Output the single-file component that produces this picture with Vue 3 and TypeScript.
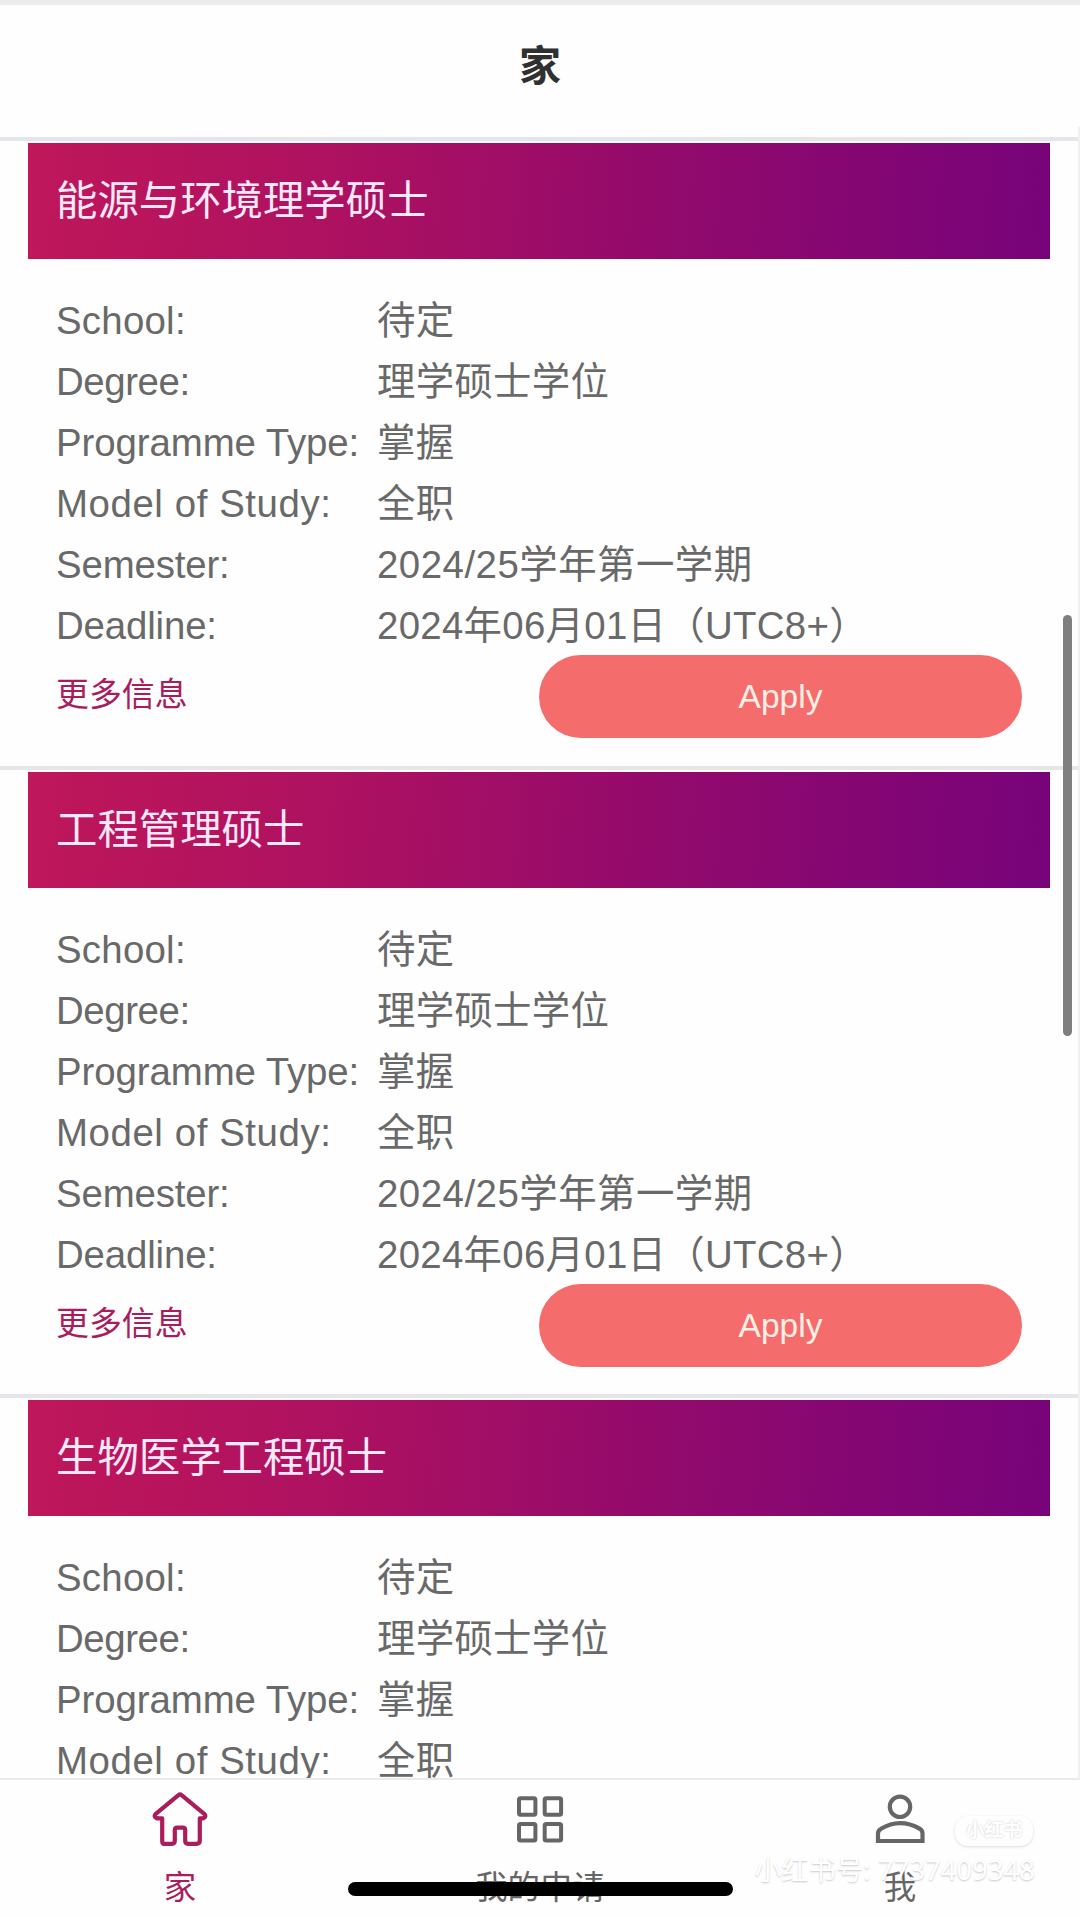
<script setup lang="ts">
interface Field {
  label: string
  value: string
  // letter spacing of the label and the value, in px
  labelTrack: number
  valueTrack: number
}

const titles: string[] = ['能源与环境理学硕士', '工程管理硕士', '生物医学工程硕士']

const fields: Field[] = [
  { label: 'School:', value: '待定', labelTrack: 0.25, valueTrack: 0.3 },
  { label: 'Degree:', value: '理学硕士学位', labelTrack: -0.4, valueTrack: 0.3 },
  { label: 'Programme Type:', value: '掌握', labelTrack: -0.08, valueTrack: 0.3 },
  { label: 'Model of Study:', value: '全职', labelTrack: 0.58, valueTrack: 0.3 },
  { label: 'Semester:', value: '2024/25学年第一学期', labelTrack: -0.15, valueTrack: 0.5 },
  { label: 'Deadline:', value: '2024年06月01日（UTC8+）', labelTrack: -0.15, valueTrack: 0.3 },
]
</script>

<template>
  <div class="screen">
    <header class="header"><h1>家</h1></header>
    <main class="list">
      <article v-for="title in titles" :key="title" class="card">
        <h2 class="banner">{{ title }}</h2>
        <dl class="fields">
          <div v-for="f in fields" :key="f.label" class="row">
            <dt :style="{ letterSpacing: f.labelTrack + 'px' }">{{ f.label }}</dt>
            <dd :style="{ letterSpacing: f.valueTrack + 'px' }">{{ f.value }}</dd>
          </div>
        </dl>
        <div class="actions">
          <a class="more">更多信息</a>
          <button class="apply" type="button">Apply</button>
        </div>
      </article>
    </main>
    <nav class="tabs">
      <a class="tab active">
        <svg width="60" height="60" viewBox="0 0 60 60" fill="none" stroke="currentColor" stroke-width="4.2" stroke-linejoin="round" stroke-linecap="round">
          <path d="M28.4 5.2Q30 3.7 31.6 5.2L54.2 23.8Q56.8 26.2 53.8 28Q52.8 28.5 49.8 28.3V50.5Q49.8 53.8 46.5 53.8H38Q35.2 53.8 35.2 50.8V40Q35.2 37.6 32.8 37.6H27.2Q24.8 37.6 24.8 40V50.8Q24.8 53.8 22 53.8H13.5Q12.2 53.8 12.2 50.5V28.3Q7.200 28.500 6.200 28Q3.200 26.200 5.800 23.800Z" />
        </svg>
        <span>家</span>
      </a>
      <a class="tab">
        <svg width="60" height="60" viewBox="0 0 60 60" fill="none" stroke="currentColor" stroke-width="4">
          <rect x="9" y="8.300" width="16.400" height="16.400" rx="1.500" />
          <rect x="34.700" y="8.300" width="16.400" height="16.400" rx="1.500" />
          <rect x="9" y="34" width="16.400" height="16.400" rx="1.500" />
          <rect x="34.700" y="34" width="16.400" height="16.400" rx="1.500" />
        </svg>
        <span>我的申请</span>
      </a>
      <a class="tab">
        <svg width="60" height="60" viewBox="0 0 60 60" fill="none" stroke="currentColor" stroke-width="4.200">
          <circle cx="30" cy="16.800" r="10.200" />
          <path d="M8 51V43.500C8 41.500 9 39.800 11 38.800C23 31.500 37 31.500 50 38.800C51.800 39.800 52.500 41.500 52.500 43.500V51Z" />
        </svg>
        <span>我</span>
      </a>
    </nav>
    <div class="edge"></div>
    <div class="scrollbar"></div>
    <div class="home-indicator"></div>
    <div class="mark">
      <span class="mark-pill">小红书</span>
      <span class="mark-id">小红书号: 7737409348</span>
    </div>
  </div>
</template>

<style>
body {
  margin: 0;
  background: #fefefe;
}
</style>

<style scoped>
.screen {
  position: relative;
  display: flex;
  flex-direction: column;
  width: 1080px;
  height: 1917px;
  overflow: hidden;
  box-sizing: border-box;
  border-top: 5px solid #ececec;
  background: #fefefe;
  color: #696969;
  font-family: "Liberation Sans", "Noto Sans CJK SC", sans-serif;
}
.header {
  flex: none;
  display: flex;
  justify-content: center;
  height: 132px;
}
h1 {
  margin: 0;
  color: #303030;
  font-size: 42px;
  font-weight: 700;
  line-height: 123px;
}
.list {
  flex: 1;
  min-height: 0;
  overflow: hidden;
}
.card {
  height: 628.600px;
  box-sizing: border-box;
  padding: 2px 30px 0 28px;
  border-top: 4px solid #e6e6ea;
}
.banner {
  height: 116px;
  margin: 0;
  padding-left: 28px;
  background: linear-gradient(94deg, #bf175a 0%, #ac1161 32%, #920a6c 62%, #77037a 100%);
  color: #fde8fa;
  font-size: 41.400px;
  font-weight: 400;
  line-height: 117px;
}
.fields {
  margin: 0;
  padding: 31px 0 0 28px;
}
.row {
  display: flex;
  height: 61px;
  font-size: 38.400px;
  line-height: 61px;
  white-space: nowrap;
}
dt {
  flex: none;
  width: 321px;
}
dd {
  margin: 0;
}
.actions {
  display: flex;
  justify-content: space-between;
  padding: 1px 28px 0;
}
.more {
  color: #aa1c5c;
  font-size: 32.900px;
  line-height: 75px;
}
.apply {
  width: 483px;
  height: 83px;
  margin-top: -2px;
  padding: 1px 0 0;
  border: 0;
  border-radius: 42px;
  background: #f56c6c;
  color: #fff0e6;
  font: 33.500px/82px "Liberation Sans", sans-serif;
}
.tabs {
  flex: none;
  display: flex;
  height: 139px;
  box-sizing: border-box;
  border-top: 2px solid #ebebeb;
  background: #fefefe;
}
.tab {
  flex: 1;
  display: flex;
  flex-direction: column;
  align-items: center;
  padding-top: 10px;
  font-size: 32.400px;
  line-height: 40px;
  color: #666;
}
.tab svg {
  flex: none;
  margin-bottom: 18px;
}
.tab.active {
  color: #aa1c5c;
}
.edge {
  position: absolute;
  top: 122px;
  right: 0;
  width: 2px;
  height: 1652px;
  background: #f0f0f0;
}
.scrollbar {
  position: absolute;
  top: 610px;
  left: 1063px;
  width: 9px;
  height: 421px;
  border-radius: 5px;
  background: #7f7f7f;
}
.home-indicator {
  position: absolute;
  top: 1877px;
  left: 348px;
  width: 385px;
  height: 14px;
  border-radius: 7px;
  background: #000;
}
.mark {
  position: absolute;
  top: 1811px;
  right: 45px;
  display: flex;
  flex-direction: column;
  align-items: flex-end;
  color: #fff;
  white-space: nowrap;
}
.mark-pill {
  width: 78px;
  height: 30px;
  margin-right: 2px;
  border-radius: 13px;
  box-shadow: 0 1px 3px rgba(0, 0, 0, 0.14);
  font-size: 19px;
  font-weight: 700;
  line-height: 30px;
  text-align: center;
  text-shadow: 0 0 2px rgba(0, 0, 0, 0.22);
}
.mark-id {
  margin-top: 5px;
  font-family: "Noto Sans", "Noto Sans CJK SC", sans-serif;
  font-size: 27px;
  letter-spacing: 0.25px;
  line-height: 38px;
  text-shadow: 0 1px 2px rgba(0, 0, 0, 0.22);
}
</style>
